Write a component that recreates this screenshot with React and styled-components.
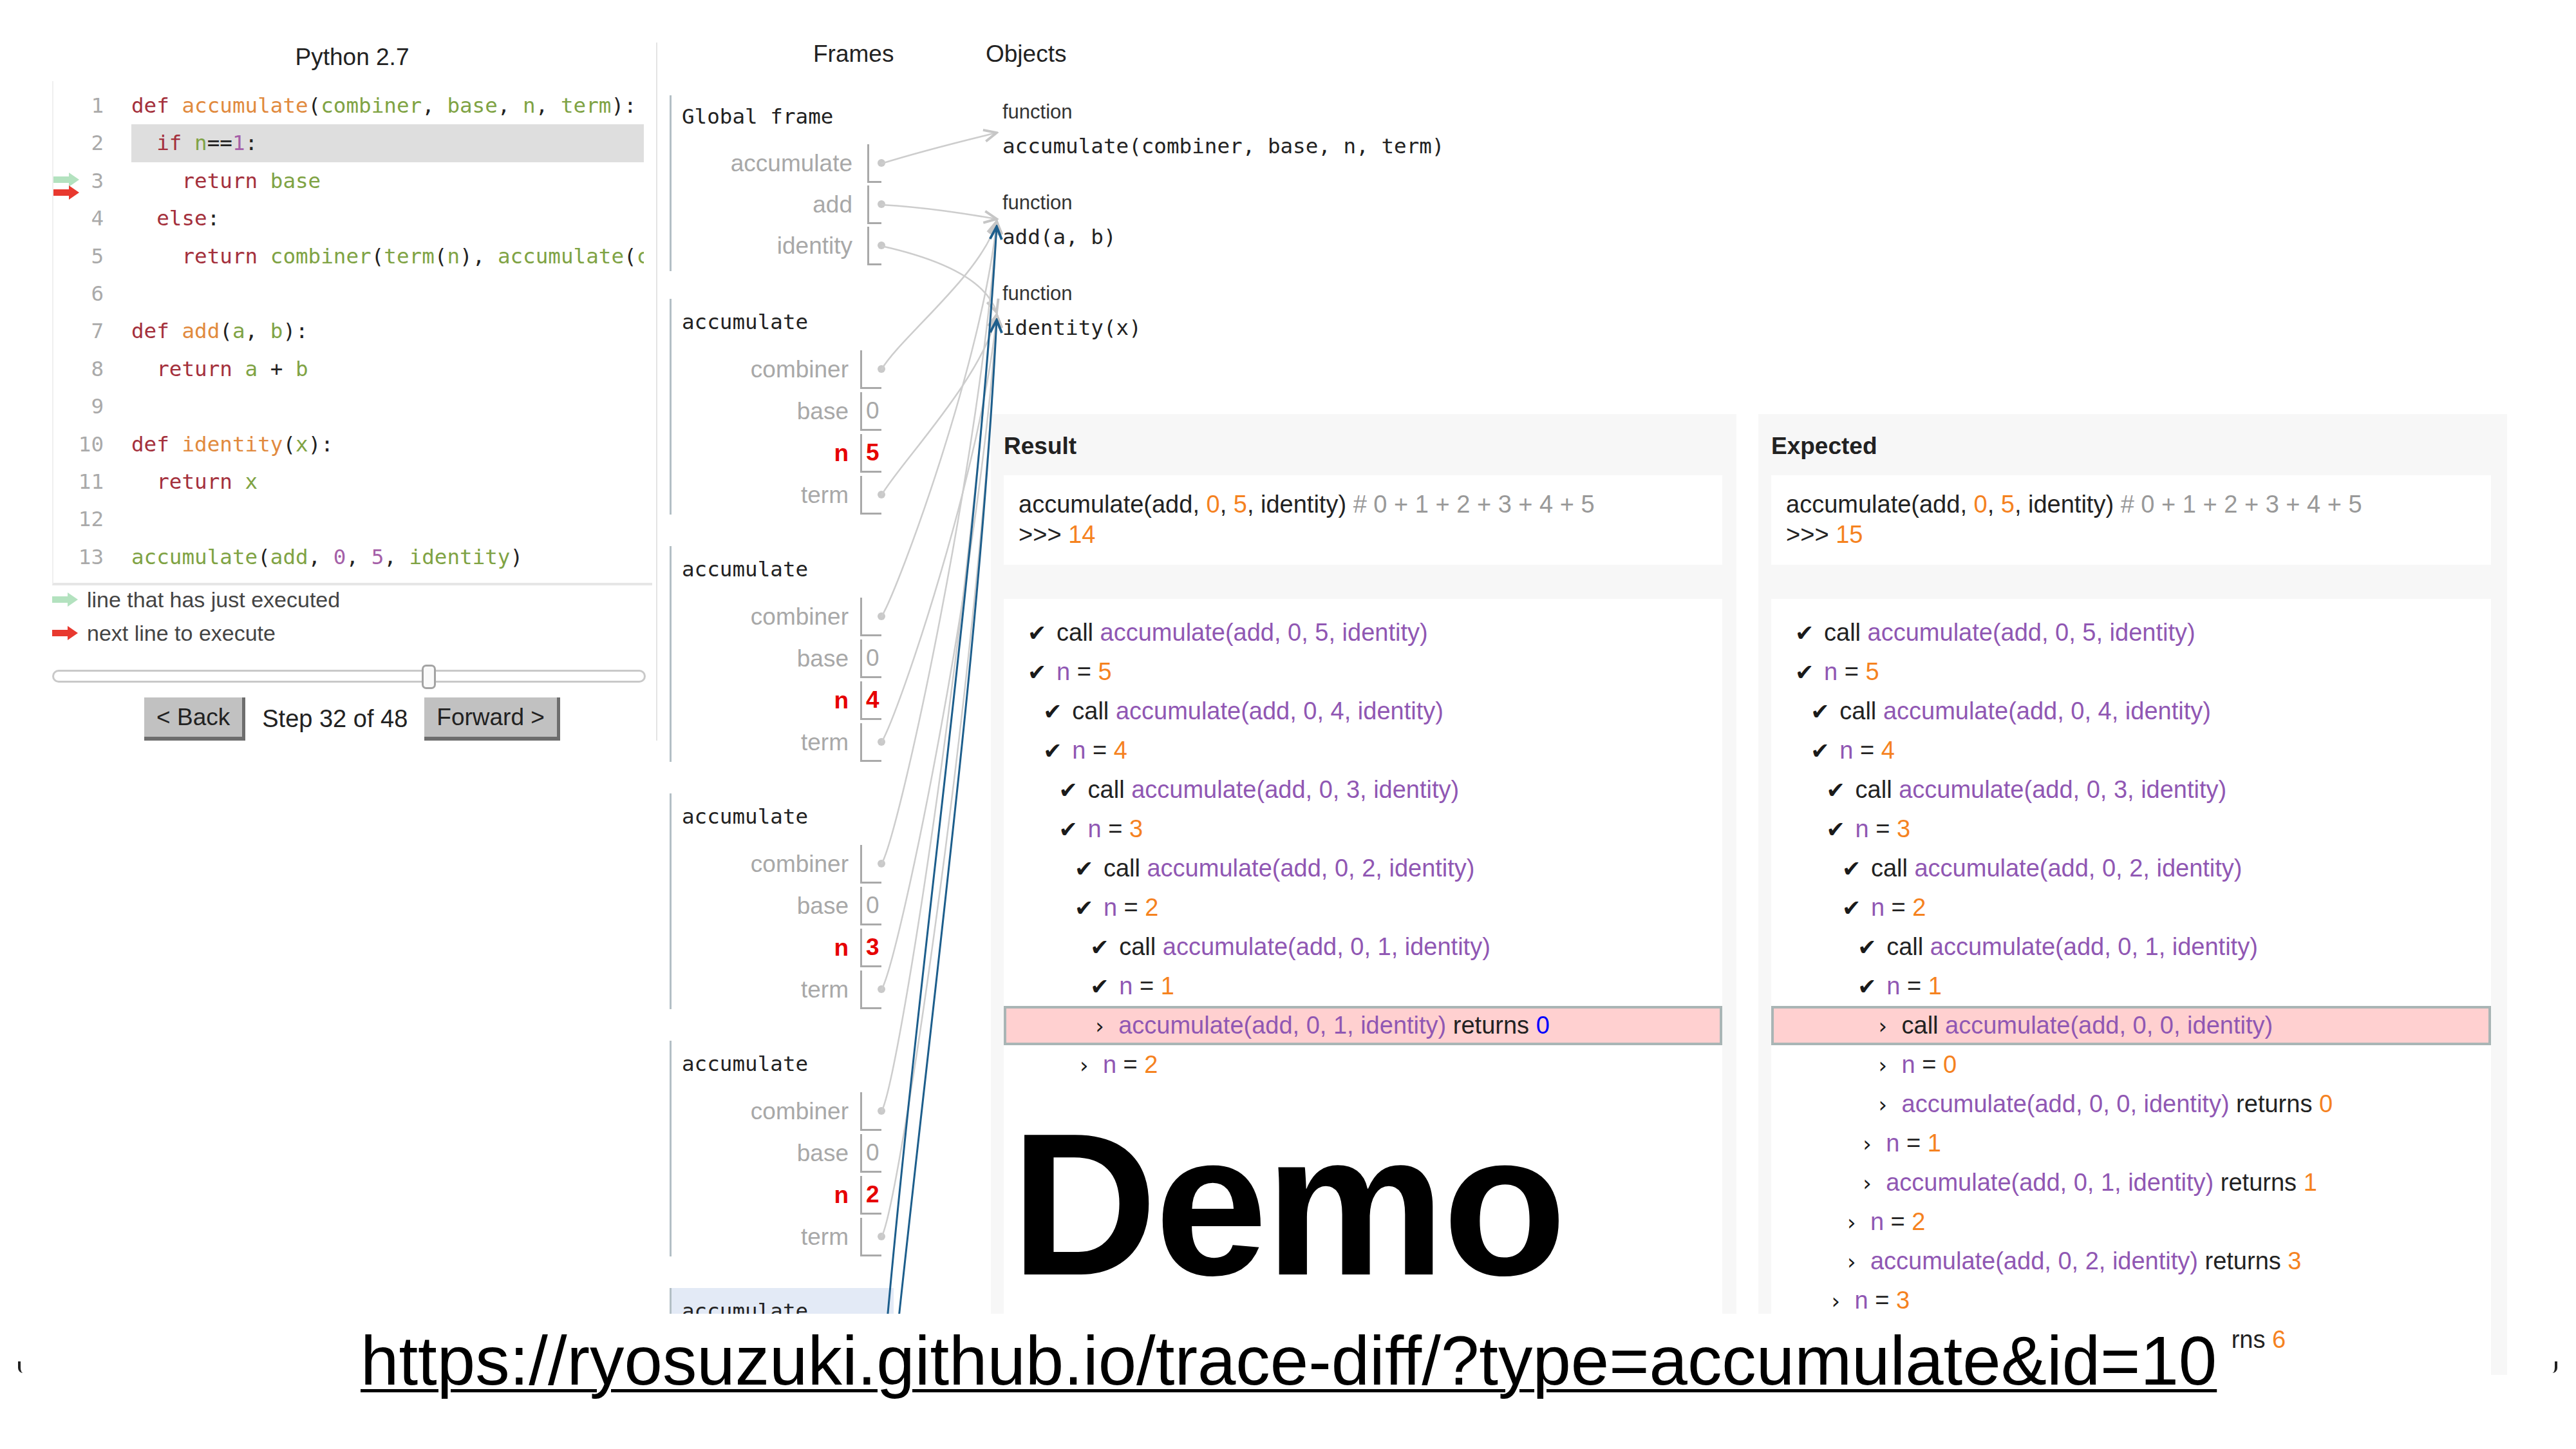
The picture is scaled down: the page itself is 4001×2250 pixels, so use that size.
import React from "react";
import styled, { createGlobalStyle } from "styled-components";

const SANS = `"Liberation Sans", Arial, sans-serif`;
const MONO = `"DejaVu Sans Mono", "Liberation Mono", monospace`;

const GlobalStyle = createGlobalStyle`
  html, body {
    margin: 0;
    padding: 0;
    background: #fff;
  }
  body {
    width: 4001px;
    height: 2250px;
    overflow: hidden;
  }
`

const Slide = styled.div`
  position: relative;
  width: 4001px;
  height: 2250px;
  background: #fff;
  overflow: hidden;
  font-family: ${SANS};
  color: #222;
`
const Screenshot = styled.div`
  position: relative;
  display: flex;
  align-items: flex-start;
  width: 4001px;
  height: 2135px;
  overflow: hidden;
`

/* ---------- left: code editor ---------- */
const LeftPanel = styled.div`
  box-sizing: border-box;
  flex-shrink: 0;
  width: 1021px;
  height: 1084px;
  margin-top: 66px;
  padding: 0 6px 0 81px;
  border-right: 2px solid #e4e4e4;
  display: flex;
  flex-direction: column;
`
const LangTitle = styled.div`
  font-size: 37px;
  line-height: 46px;
  text-align: center;
`
const CodeBox = styled.div`
  margin-top: 14px;
  border-left: 2px solid #efefef;
  border-bottom: 4px solid #e6e6e6;
  padding: 9px 13px 11px 0;
`
const CodeLine = styled.div`
  display: flex;
  height: 58.4px;
`
const Gutter = styled.div`
  position: relative;
  flex-shrink: 0;
  box-sizing: border-box;
  width: 121px;
  padding-right: 43px;
  text-align: right;
  font-family: ${MONO};
  font-size: 32.6px;
  line-height: 58.4px;
  color: #aaa;
`
const GutterArrow = styled.span`
  position: absolute;
  left: 0;
  top: ${p => p.$top}px;
  line-height: 0;
`
const CodeText = styled.div`
  flex: 1;
  overflow: hidden;
  white-space: pre;
  font-family: ${MONO};
  font-size: 32.6px;
  line-height: 58.4px;
  background: ${p => (p.$active ? "#dedede" : "transparent")};
`
const tokenColors = {
  kw: "#a4303c",
  fn: "#e18a3e",
  var: "#7fa344",
  num: "#a560a8",
  pun: "#222",
}
const Tok = styled.span`
  color: ${p => tokenColors[p.$k]};
`
const Legend = styled.div`
  display: flex;
  flex-direction: column;
  gap: 8px;
`
const LegendRow = styled.div`
  display: flex;
  align-items: center;
  gap: 14px;
  height: 44px;
  font-size: 34px;
  color: #444;
`
const Slider = styled.div`
  position: relative;
  display: flex;
  align-items: center;
  height: 38px;
  margin: 27px 10px 0 0;
`
const Track = styled.div`
  flex: 1;
  box-sizing: border-box;
  height: 20px;
  border: 3px solid #c9c9c9;
  border-radius: 10px;
  background: #fff;
`
const Thumb = styled.div`
  position: absolute;
  top: 0;
  left: ${p => p.$left}px;
  box-sizing: border-box;
  width: 22px;
  height: 38px;
  border: 3px solid #a3a3a3;
  border-radius: 7px;
  background: #fafafa;
`
const Nav = styled.div`
  display: flex;
  justify-content: center;
  align-items: center;
  gap: 26px;
  margin-top: 15px;
`
const NavButton = styled.button`
  box-sizing: border-box;
  height: 67px;
  padding: 0 19px;
  border: none;
  border-right: 5px solid #6d6d6d;
  border-bottom: 6px solid #6d6d6d;
  background: #c1c1c1;
  font-family: ${SANS};
  font-size: 37px;
  color: #222;
`
const StepText = styled.span`
  font-size: 38px;
  color: #222;
`

/* ---------- frames ---------- */
const FramesColumn = styled.div`
  flex-shrink: 0;
  width: 518px;
  display: flex;
  flex-direction: column;
`
const ColHeader = styled.div`
  margin-top: 61px;
  margin-left: ${p => p.$shift || 0}px;
  padding-left: ${p => p.$pad || 0}px;
  font-size: 37px;
  line-height: 46px;
`
const FrameList = styled.div`
  margin-top: 41px;
  padding-left: 19px;
  display: flex;
  flex-direction: column;
`
const Frame = styled.div`
  width: 345px;
  border-left: 3px solid #b3bfc5;
  padding: ${p => (p.$global ? "10px 0 9px" : "13px 0 0")};
  margin-bottom: ${p => (p.$global ? 43 : 49)}px;
  background: ${p => (p.$current ? "#e3eaf6" : "transparent")};
`
const FrameTitle = styled.div`
  padding-left: 16px;
  font-family: ${MONO};
  font-size: 32.6px;
  line-height: 46px;
  color: #222;
`
const VarRows = styled.div`
  display: flex;
  flex-direction: column;
  gap: ${p => (p.$global ? 4 : 5)}px;
  margin-top: ${p => (p.$global ? 20 : 21)}px;
`
const VarRow = styled.div`
  display: flex;
  height: 60px;
`
const VarName = styled.div`
  width: ${p => p.$w}px;
  text-align: right;
  font-size: 37px;
  line-height: 60px;
  color: ${p => (p.$hot ? "#e60000" : "#a8a8a8")};
  font-weight: ${p => (p.$hot ? 700 : 400)};
`
const VarBox = styled.div`
  position: relative;
  box-sizing: border-box;
  width: ${p => p.$w}px;
  margin-left: ${p => p.$gap}px;
  padding-left: 6px;
  border-left: 3px solid #a9a9a9;
  border-bottom: 3px solid #a9a9a9;
  font-size: 37px;
  line-height: 57px;
  color: ${p => (p.$hot ? "#e60000" : "#a8a8a8")};
  font-weight: ${p => (p.$hot ? 700 : 400)};
`
const Dot = styled.span`
  position: absolute;
  right: -6px;
  top: 50%;
  width: 12px;
  height: 12px;
  margin-top: -6px;
  border-radius: 50%;
  background: #c9c9c9;
`

/* ---------- objects + panels ---------- */
const RightColumn = styled.div`
  flex: 1;
  height: 2135px;
  display: flex;
  flex-direction: column;
`
const ObjectsArea = styled.div`
  flex-shrink: 0;
  height: 643px;
  display: flex;
  flex-direction: column;
`
const ObjectList = styled.div`
  margin-top: 47px;
  padding-left: 18px;
  display: flex;
  flex-direction: column;
  gap: 45px;
`
const ObjLabel = styled.div`
  font-size: 31px;
  line-height: 40px;
  color: #333;
`
const ObjCode = styled.div`
  margin-top: 10px;
  font-family: ${MONO};
  font-size: 32.6px;
  line-height: 46px;
  color: #222;
`
const PanelsRow = styled.div`
  flex: 1;
  display: flex;
  gap: 34px;
`
const Panel = styled.div`
  box-sizing: border-box;
  width: ${p => p.$w}px;
  padding: 27px ${p => p.$pr}px 0 20px;
  background: #f7f7f7;
  display: flex;
  flex-direction: column;
`
const PanelTitle = styled.div`
  font-size: 37px;
  font-weight: 700;
  line-height: 45px;
`
const ResultBox = styled.div`
  margin-top: 23px;
  padding: 22px 23px 23px;
  background: #fff;
  font-size: 38px;
  line-height: 47px;
  white-space: pre;
`
const TraceBox = styled.div`
  flex: 1;
  margin-top: 53px;
  padding-top: 22px;
  background: #fff;
`
const TraceRow = styled.div`
  box-sizing: border-box;
  display: flex;
  align-items: center;
  height: 61px;
  padding-left: ${p => 37 + p.$lv * 24.3 - (p.$hl ? 4 : 0)}px;
  font-size: 38px;
  white-space: pre;
  background: ${p => (p.$hl ? "#ffd0d0" : "transparent")};
  border: ${p => (p.$hl ? "4px solid #a9b5b5" : "none")};
`
const Marker = styled.span`
  flex-shrink: 0;
  width: ${p => (p.$check ? 45 : 44)}px;
  font-family: "DejaVu Sans", sans-serif;
  font-size: ${p => (p.$check ? 35 : 34)}px;
  color: #1a1a1a;
  padding-left: ${p => (p.$check ? 0 : 8)}px;
  box-sizing: border-box;
`
const Ink = styled.span`
  color: ${p => p.$c};
`

/* ---------- slide overlays ---------- */
const Wires = styled.svg`
  position: absolute;
  left: 0;
  top: 0;
  pointer-events: none;
`
const DemoTitle = styled.div`
  position: absolute;
  left: 1570px;
  top: 1713px;
  font-size: 315px;
  font-weight: 700;
  line-height: 1;
  letter-spacing: -4px;
  color: #000;
`
const UrlBand = styled.div`
  position: absolute;
  left: 0;
  top: 2040px;
  box-sizing: border-box;
  width: 3464px;
  height: 210px;
  padding: 20px 0 0 560px;
  background: #fff;
`
const Url = styled.span`
  font-size: 106.8px;
  line-height: 106px;
  color: #000;
  text-decoration: underline;
  text-decoration-thickness: 5px;
  text-underline-offset: 7px;
  white-space: nowrap;
`
const Corner = styled.span`
  position: absolute;
  top: 2114px;
  left: ${p => p.$left}px;
  width: 6px;
  height: 18px;
  border-${p => p.$side}: 4px solid #222;
  border-bottom-${p => p.$side}-radius: 8px;
`

const GREEN = "#b3e2bf";
const RED = "#e8392f";
const PURPLE = "#9057b3";
const ORANGE = "#f5821f";

const Arrow = ({ color }) => (
  <svg width="40" height="22" viewBox="0 0 40 22">
    <path d="M0 6 H24 V0 L40 11 L24 22 V16 H0 Z" fill={color} />
  </svg>
)

const codeLines = [
  [["kw", "def"], ["pun", " "], ["fn", "accumulate"], ["pun", "("], ["var", "combiner"], ["pun", ", "], ["var", "base"], ["pun", ", "], ["var", "n"], ["pun", ", "], ["var", "term"], ["pun", "):"]],
  [["pun", "  "], ["kw", "if"], ["pun", " "], ["var", "n"], ["pun", "=="], ["num", "1"], ["pun", ":"]],
  [["pun", "    "], ["kw", "return"], ["pun", " "], ["var", "base"]],
  [["pun", "  "], ["kw", "else"], ["pun", ":"]],
  [["pun", "    "], ["kw", "return"], ["pun", " "], ["var", "combiner"], ["pun", "("], ["var", "term"], ["pun", "("], ["var", "n"], ["pun", "), "], ["var", "accumulate"], ["pun", "("], ["var", "combiner"], ["pun", ", "], ["var", "base"], ["pun", ", "], ["var", "n"], ["pun", "-"], ["num", "1"], ["pun", ", "], ["var", "term"], ["pun", "))"]],
  [],
  [["kw", "def"], ["pun", " "], ["fn", "add"], ["pun", "("], ["var", "a"], ["pun", ", "], ["var", "b"], ["pun", "):"]],
  [["pun", "  "], ["kw", "return"], ["pun", " "], ["var", "a"], ["pun", " + "], ["var", "b"]],
  [],
  [["kw", "def"], ["pun", " "], ["fn", "identity"], ["pun", "("], ["var", "x"], ["pun", "):"]],
  [["pun", "  "], ["kw", "return"], ["pun", " "], ["var", "x"]],
  [],
  [["var", "accumulate"], ["pun", "("], ["var", "add"], ["pun", ", "], ["num", "0"], ["pun", ", "], ["num", "5"], ["pun", ", "], ["var", "identity"], ["pun", ")"]],
]

const globals = [
  { name: "accumulate", ptr: true },
  { name: "add", ptr: true },
  { name: "identity", ptr: true },
]
const frameNs = [5, 4, 3, 2, 1]

const FRAME_TOPS = [464, 848, 1232, 1616];
const DOT_X = 1369;
const ADD_TIP = [1548, 344];
const ID_TIP = [1548, 489];

const curveTo = (y0, tip) => {
  const [tx, ty] = tip;
  const c2y = ty + (y0 - ty) * 0.35;
  return `M${DOT_X} ${y0} C 1398 ${y0 - 50}, 1526 ${c2y}, ${tx} ${ty}`;
}

const callTrace = (lv, n) => ({ lv, mark: "check", kind: "call", args: `accumulate(add, 0, ${n}, identity)` });
const assignTrace = (lv, n, mark = "check") => ({ lv, mark, kind: "assign", val: String(n) });
const retTrace = (lv, n, val, extra = {}) => ({ lv, mark: "chev", kind: "ret", args: `accumulate(add, 0, ${n}, identity)`, val: String(val), ...extra });

const commonTrace = [
  callTrace(0, 5), assignTrace(0, 5),
  callTrace(1, 4), assignTrace(1, 4),
  callTrace(2, 3), assignTrace(2, 3),
  callTrace(3, 2), assignTrace(3, 2),
  callTrace(4, 1), assignTrace(4, 1),
]

const resultTrace = [
  ...commonTrace,
  retTrace(4, 1, 0, { hl: true, blue: true }),
  assignTrace(3, 2, "chev"),
]

const expectedTrace = [
  ...commonTrace,
  { lv: 5, mark: "chev", kind: "call", args: "accumulate(add, 0, 0, identity)", hl: true },
  assignTrace(5, 0, "chev"),
  retTrace(5, 0, 0),
  assignTrace(4, 1, "chev"),
  retTrace(4, 1, 1),
  assignTrace(3, 2, "chev"),
  retTrace(3, 2, 3),
  assignTrace(2, 3, "chev"),
  retTrace(2, 3, 6),
]

const TraceItem = ({ item }) => (
  <TraceRow $lv={item.lv} $hl={item.hl}>
    <Marker $check={item.mark === "check"}>{item.mark === "check" ? "✔" : "›"}</Marker>
    {item.kind === "call" && (
      <>
        <Ink $c="#222">call </Ink>
        <Ink $c={PURPLE}>{item.args}</Ink>
      </>
    )}
    {item.kind === "assign" && (
      <>
        <Ink $c={PURPLE}>n</Ink>
        <Ink $c="#222"> = </Ink>
        <Ink $c={ORANGE}>{item.val}</Ink>
      </>
    )}
    {item.kind === "ret" && (
      <>
        <Ink $c={PURPLE}>{item.args}</Ink>
        <Ink $c="#222"> returns </Ink>
        <Ink $c={item.blue ? "#0000ff" : ORANGE}>{item.val}</Ink>
      </>
    )}
  </TraceRow>
)

const OutputPanel = ({ title, width, pr, answer, trace }) => (
  <Panel $w={width} $pr={pr}>
    <PanelTitle>{title}</PanelTitle>
    <ResultBox>
      <div>
        accumulate(add, <Ink $c={ORANGE}>0</Ink>, <Ink $c={ORANGE}>5</Ink>, identity)
        <Ink $c="#999"> # 0 + 1 + 2 + 3 + 4 + 5</Ink>
      </div>
      <div>
        {">>> "}
        <Ink $c={ORANGE}>{answer}</Ink>
      </div>
    </ResultBox>
    <TraceBox>
      {trace.map((item, i) => (
        <TraceItem key={i} item={item} />
      ))}
    </TraceBox>
  </Panel>
)

const App = () => {
  const combinerYs = FRAME_TOPS.map(t => t + 110);
  const termYs = FRAME_TOPS.map(t => t + 305);

  return (
    <Slide>
      <GlobalStyle />
      <Screenshot>
        <LeftPanel>
          <LangTitle>Python 2.7</LangTitle>
          <CodeBox>
            {codeLines.map((toks, i) => (
              <CodeLine key={i}>
                <Gutter>
                  {i === 2 && (
                    <>
                      <GutterArrow $top={16}><Arrow color={GREEN} /></GutterArrow>
                      <GutterArrow $top={36}><Arrow color={RED} /></GutterArrow>
                    </>
                  )}
                  {i + 1}
                </Gutter>
                <CodeText $active={i === 1}>
                  {toks.map(([k, t], j) => (
                    <Tok key={j} $k={k}>{t}</Tok>
                  ))}
                </CodeText>
              </CodeLine>
            ))}
          </CodeBox>
          <Legend>
            <LegendRow><Arrow color={GREEN} />line that has just executed</LegendRow>
            <LegendRow><Arrow color={RED} />next line to execute</LegendRow>
          </Legend>
          <Slider>
            <Track />
            <Thumb $left={574} />
          </Slider>
          <Nav>
            <NavButton>&lt; Back</NavButton>
            <StepText>Step 32 of 48</StepText>
            <NavButton>Forward &gt;</NavButton>
          </Nav>
        </LeftPanel>

        <FramesColumn>
          <ColHeader $pad={242}>Frames</ColHeader>
          <FrameList>
            <Frame $global>
              <FrameTitle>Global frame</FrameTitle>
              <VarRows $global>
                {globals.map(v => (
                  <VarRow key={v.name}>
                    <VarName $w={281}>{v.name}</VarName>
                    <VarBox $w={22} $gap={23}><Dot /></VarBox>
                  </VarRow>
                ))}
              </VarRows>
            </Frame>
            {frameNs.map((n, i) => (
              <Frame key={n} $current={i === frameNs.length - 1}>
                <FrameTitle>accumulate</FrameTitle>
                <VarRows>
                  <VarRow>
                    <VarName $w={275}>combiner</VarName>
                    <VarBox $w={33} $gap={18}><Dot /></VarBox>
                  </VarRow>
                  <VarRow>
                    <VarName $w={275}>base</VarName>
                    <VarBox $w={33} $gap={18}>0</VarBox>
                  </VarRow>
                  <VarRow>
                    <VarName $w={275} $hot>n</VarName>
                    <VarBox $w={33} $gap={18} $hot>{n}</VarBox>
                  </VarRow>
                  <VarRow>
                    <VarName $w={275}>term</VarName>
                    <VarBox $w={33} $gap={18}><Dot /></VarBox>
                  </VarRow>
                </VarRows>
              </Frame>
            ))}
          </FrameList>
        </FramesColumn>

        <RightColumn>
          <ObjectsArea>
            <ColHeader $shift={-8}>Objects</ColHeader>
            <ObjectList>
              <div>
                <ObjLabel>function</ObjLabel>
                <ObjCode>accumulate(combiner, base, n, term)</ObjCode>
              </div>
              <div>
                <ObjLabel>function</ObjLabel>
                <ObjCode>add(a, b)</ObjCode>
              </div>
              <div>
                <ObjLabel>function</ObjLabel>
                <ObjCode>identity(x)</ObjCode>
              </div>
            </ObjectList>
          </ObjectsArea>
          <PanelsRow>
            <OutputPanel title="Result" width={1158} pr={22} answer="14" trace={resultTrace} />
            <OutputPanel title="Expected" width={1163} pr={25} answer="15" trace={expectedTrace} />
          </PanelsRow>
        </RightColumn>

        <Wires width="4001" height="2135" viewBox="0 0 4001 2135">
          <defs>
            <marker id="grayHead" viewBox="0 0 20 20" refX="18" refY="10" markerWidth="26" markerHeight="26" markerUnits="userSpaceOnUse" orient="auto">
              <path d="M3 3 L18 10 L3 17" fill="none" stroke="#c6c6c6" strokeWidth="3" />
            </marker>
            <marker id="blueHead" viewBox="0 0 20 20" refX="18" refY="10" markerWidth="26" markerHeight="26" markerUnits="userSpaceOnUse" orient="auto">
              <path d="M3 3 L18 10 L3 17" fill="none" stroke="#1d5e8c" strokeWidth="3" />
            </marker>
          </defs>
          <g fill="none" stroke="#cdcdcd" strokeWidth="2.5" markerEnd="url(#grayHead)">
            <path d={`M${DOT_X} 254 C 1440 232, 1500 218, 1548 206`} />
            <path d={`M${DOT_X} 318 C 1440 322, 1500 332, ${ADD_TIP[0]} ${ADD_TIP[1] - 4}`} />
            <path d={`M${DOT_X} 382 C 1450 400, 1530 430, ${ID_TIP[0]} ${ID_TIP[1] - 4}`} />
            {combinerYs.map(y => <path key={`c${y}`} d={curveTo(y, ADD_TIP)} />)}
            {termYs.map(y => <path key={`t${y}`} d={curveTo(y, ID_TIP)} />)}
          </g>
          <g fill="none" stroke="#1d5e8c" strokeWidth="3" markerEnd="url(#blueHead)">
            <path d={`M1370 2140 C 1425 1500, 1515 900, ${ADD_TIP[0]} ${ADD_TIP[1] + 8}`} />
            <path d={`M1386 2140 C 1448 1550, 1522 1000, ${ID_TIP[0]} ${ID_TIP[1] + 8}`} />
          </g>
        </Wires>
      </Screenshot>

      <DemoTitle>Demo</DemoTitle>
      <UrlBand>
        <Url>https://ryosuzuki.github.io/trace-diff/?type=accumulate&amp;id=10</Url>
      </UrlBand>
      <Corner $left={28} $side="left" />
      <Corner $left={3962} $side="right" />
    </Slide>
  )
}

export default App
